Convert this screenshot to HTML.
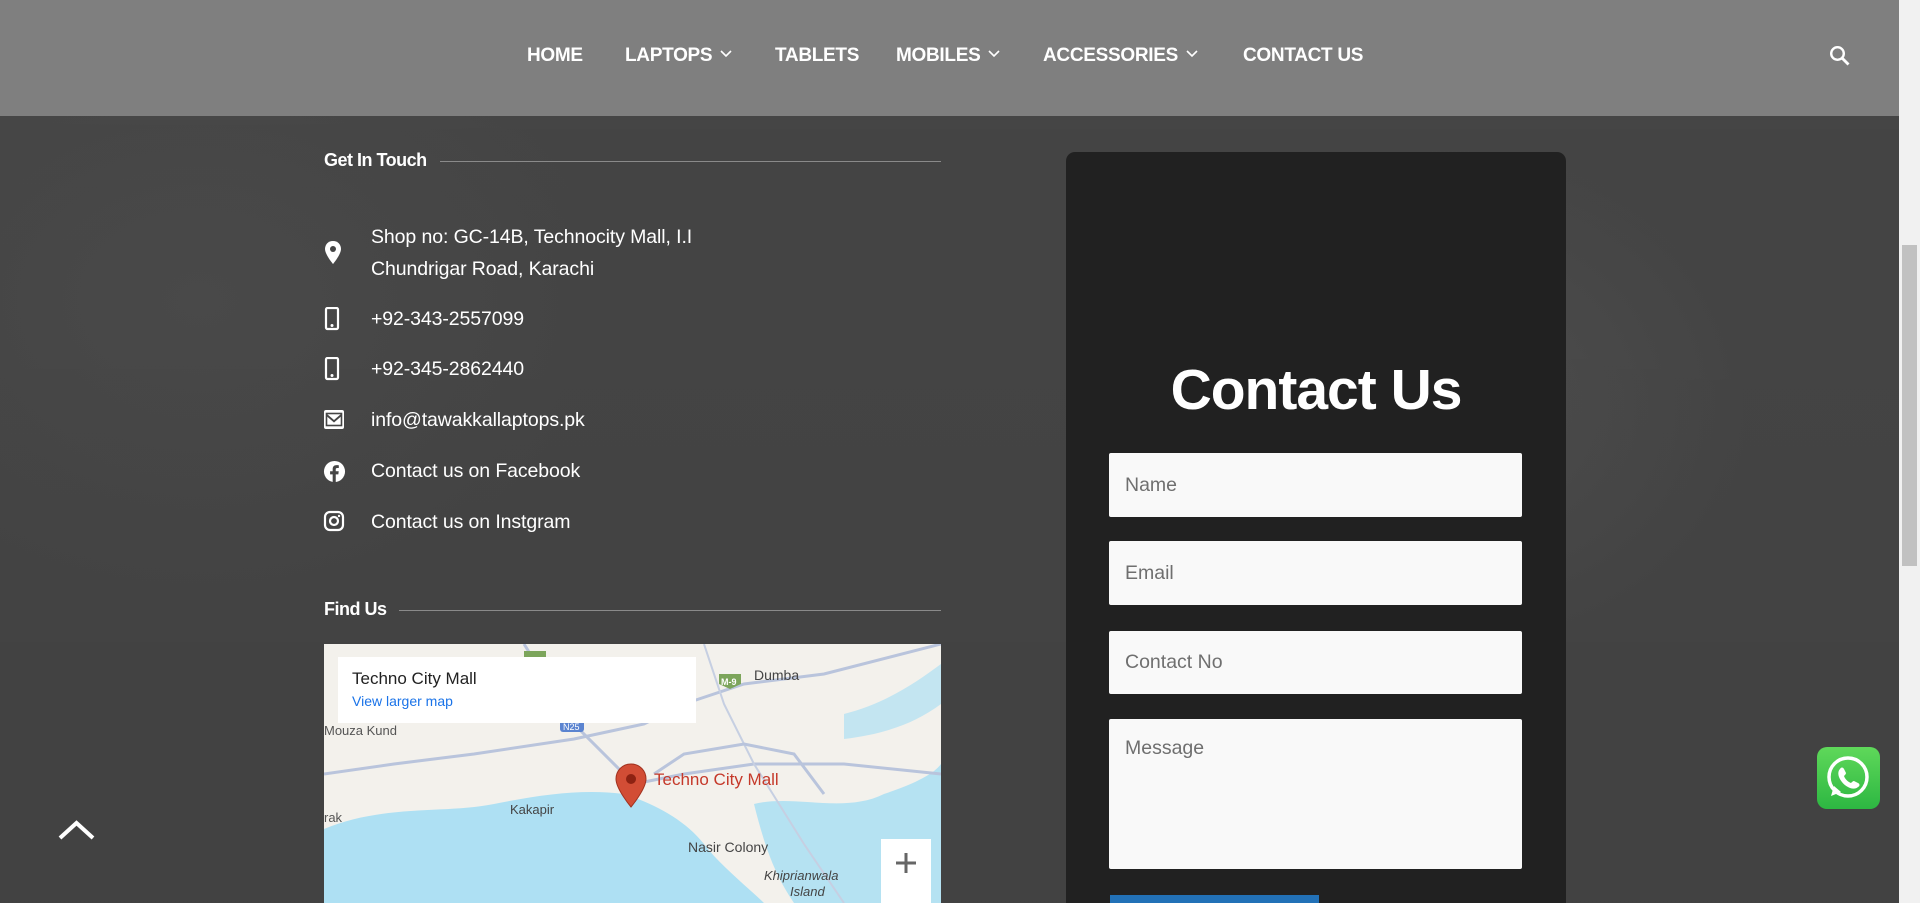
<!DOCTYPE html>
<html style="width:1920px;height:903px;overflow:hidden"><head><meta charset="utf-8"><style>
*{margin:0;padding:0;box-sizing:border-box}
body{width:1920px;height:903px;overflow:hidden;position:relative;font-family:"Liberation Sans",sans-serif;background:#434343}
.bg{position:absolute;left:0;top:0;width:1899px;height:903px;background:
linear-gradient(180deg,rgba(0,0,0,0) 0,rgba(0,0,0,.05) 100%),
radial-gradient(ellipse 300px 250px at 1450px 400px,#4e4e4e,rgba(0,0,0,0)),
radial-gradient(ellipse 400px 300px at 200px 300px,#4a4a4a,rgba(0,0,0,0)),
#454545}
.nav{position:absolute;left:0;top:0;width:1899px;height:116px;background:#7f7f7f}
.nav a{position:absolute;top:45px;color:#fff;font-size:19px;font-weight:bold;letter-spacing:-.3px;text-decoration:none;white-space:nowrap}
.nav a svg{margin-left:8px;vertical-align:3px}
.sb{position:absolute;left:1899px;top:0;width:21px;height:903px;background:#f1f1f1}
.sb div{position:absolute;left:3px;top:245px;width:15px;height:321px;background:#c1c1c1}
h4{position:absolute;color:#fff;font-size:18px;font-weight:bold;letter-spacing:-.5px}
.line{position:absolute;height:1px;background:#8a8a8a}
.it{position:absolute;left:371px;color:#fff;font-size:19.5px;letter-spacing:-.1px}
.ic{position:absolute;left:323px}
.card{position:absolute;left:1066px;top:152px;width:500px;height:751px;overflow:hidden;background:#212121;border-radius:9px 9px 0 0}
.card h2{position:absolute;left:0;width:100%;top:208px;line-height:60px;text-align:center;color:#fff;font-size:57px;font-weight:bold;letter-spacing:-1px}
.in{position:absolute;left:43px;width:413px;background:#f9f9f9;border-radius:2px;color:#6f6f6f;font-size:19.5px;padding-left:16px}
.map{position:absolute;left:324px;top:644px;width:617px;height:259px;overflow:hidden;background:#f3f1ec}
</style></head><body>
<div class="bg"></div>
<div class="nav">
<a style="left:527px">HOME</a>
<a style="left:625px">LAPTOPS<svg width="12" height="8" viewBox="0 0 12 8"><path d="M1 1l5 5 5-5" stroke="#fff" stroke-width="1.6" fill="none"/></svg></a>
<a style="left:775px">TABLETS</a>
<a style="left:896px">MOBILES<svg width="12" height="8" viewBox="0 0 12 8"><path d="M1 1l5 5 5-5" stroke="#fff" stroke-width="1.6" fill="none"/></svg></a>
<a style="left:1043px">ACCESSORIES<svg width="12" height="8" viewBox="0 0 12 8"><path d="M1 1l5 5 5-5" stroke="#fff" stroke-width="1.6" fill="none"/></svg></a>
<a style="left:1243px">CONTACT US</a>
<svg style="position:absolute;left:1828px;top:44px" width="24" height="24" viewBox="0 0 24 24"><circle cx="9.5" cy="9.5" r="6.3" stroke="#fff" stroke-width="2.4" fill="none"/><path d="M14 14l6.5 6.5" stroke="#fff" stroke-width="2.8"/></svg>
</div>
<div class="sb"><div></div></div>

<h4 style="left:324px;top:150px">Get In Touch</h4>
<div class="line" style="left:440px;top:161px;width:501px"></div>

<svg class="ic" style="top:240px" width="20" height="26" viewBox="0 0 20 26"><path d="M10 1C5 1 2 4.8 2 9c0 5.5 8 15 8 15s8-9.5 8-15c0-4.2-3-8-8-8z" fill="#fff"/><circle cx="10" cy="9" r="3" fill="#454545"/></svg>
<div class="it" style="top:226px">Shop no: GC-14B, Technocity Mall, I.I</div>
<div class="it" style="top:258px">Chundrigar Road, Karachi</div>

<svg class="ic" style="top:307px" width="18" height="24" viewBox="0 0 18 24"><rect x="3" y="1" width="12" height="21" rx="1.5" fill="none" stroke="#fff" stroke-width="2.2"/><circle cx="9" cy="18.5" r="1.5" fill="#fff"/></svg>
<div class="it" style="top:308px">+92-343-2557099</div>
<svg class="ic" style="top:357px" width="18" height="24" viewBox="0 0 18 24"><rect x="3" y="1" width="12" height="21" rx="1.5" fill="none" stroke="#fff" stroke-width="2.2"/><circle cx="9" cy="18.5" r="1.5" fill="#fff"/></svg>
<div class="it" style="top:358px">+92-345-2862440</div>
<svg class="ic" style="top:409px" width="22" height="22" viewBox="0 0 22 22"><rect x="1" y="1" width="20" height="19" rx="2" fill="#fff"/><path d="M4 5l7 6 7-6v11H4z" fill="#454545"/><path d="M4 7.5l7 6 7-6v9H4z" fill="#fff"/><rect x="3.5" y="4.5" width="15" height="12" fill="none" stroke="#454545" stroke-width="1.6"/></svg>
<div class="it" style="top:409px">info@tawakkallaptops.pk</div>
<svg class="ic" style="top:460px" width="23" height="23" viewBox="0 0 24 24"><circle cx="12" cy="12" r="11" fill="#fff"/><path d="M13.3 23V15h2.7l.4-3.2h-3.1V9.8c0-.9.3-1.5 1.6-1.5h1.6V5.5c-.3 0-1.3-.1-2.4-.1-2.4 0-4 1.4-4 4.1v2.3H7.4V15h2.7v8z" fill="#454545"/></svg>
<div class="it" style="top:460px">Contact us on Facebook</div>
<svg class="ic" style="top:510px" width="22" height="22" viewBox="0 0 22 22"><rect x="2" y="2" width="18" height="18" rx="5" fill="none" stroke="#fff" stroke-width="2.2"/><circle cx="11" cy="11" r="4" fill="none" stroke="#fff" stroke-width="2.2"/><circle cx="16" cy="6" r="1.2" fill="#fff"/></svg>
<div class="it" style="top:511px">Contact us on Instgram</div>

<h4 style="left:324px;top:599px">Find Us</h4>
<div class="line" style="left:399px;top:610px;width:542px"></div>

<div class="map">
<svg width="617" height="259" viewBox="0 0 617 259">
<path d="M0 185 C60 160 120 170 170 160 C220 150 260 145 300 150 C330 160 360 175 380 200 C395 220 420 240 440 259 L0 259Z" fill="#aee0f3"/>
<path d="M430 160 C470 150 520 170 560 150 C590 140 610 130 617 120 L617 259 L470 259 C450 230 440 200 430 160Z" fill="#aee0f3" opacity=".9"/>
<path d="M520 70 C560 60 590 40 617 20 L617 60 C590 80 560 90 520 95Z" fill="#aee0f3" opacity=".7"/>
<path d="M0 130 L70 120 L150 110 L250 95 L320 80 L360 60 L420 40 L500 30 L617 0" stroke="#b9c4dc" stroke-width="3" fill="none"/>
<path d="M200 0 L250 80 L310 140 L360 130 L430 120 L520 120 L617 130" stroke="#b9c4dc" stroke-width="3" fill="none"/>
<path d="M380 0 L400 60 L430 120 L480 200 L520 259" stroke="#c6cfe2" stroke-width="2" fill="none"/>
<path d="M330 130 L360 110 L420 100 L470 110 L500 150" stroke="#b9c4dc" stroke-width="3" fill="none"/>
<path d="M200 7 h22 v12 h-22z" fill="#7ca55b"/>
<path d="M395 30 h22 v10 l-11 5 l-11 -5z" fill="#7ca55b"/><text x="397" y="41" font-size="9" fill="#fff" font-weight="bold" font-family="Liberation Sans">M-9</text>
<rect x="236" y="75" width="24" height="13" rx="3" fill="#5b84d0"/><text x="239" y="86" font-size="9" fill="#fff" font-family="Liberation Sans">N25</text>
<text x="430" y="36" font-size="14" fill="#444" font-family="Liberation Sans">Dumba</text>
<text x="0" y="91" font-size="13" fill="#555" font-family="Liberation Sans">Mouza Kund</text>
<text x="0" y="178" font-size="13" fill="#555" font-family="Liberation Sans">rak</text>
<text x="186" y="170" font-size="13" fill="#444" font-family="Liberation Sans">Kakapir</text>
<text x="364" y="208" font-size="14" fill="#444" font-family="Liberation Sans">Nasir Colony</text>
<text x="440" y="236" font-size="13" fill="#444" font-style="italic" font-family="Liberation Sans">Khiprianwala</text>
<text x="466" y="252" font-size="13" fill="#444" font-style="italic" font-family="Liberation Sans">Island</text>
<text x="330" y="141" font-size="17" fill="#c5392a" font-family="Liberation Sans">Techno City Mall</text>
<path d="M307 120c-9 0-15 7-15 15 0 10 15 28 15 28s15-18 15-28c0-8-6-15-15-15z" fill="#d24d35" stroke="#a1321f"/><circle cx="307" cy="135" r="5" fill="#8d2212"/>
<rect x="14" y="13" width="358" height="66" fill="#fff"/>
<text x="28" y="40" font-size="17" fill="#222" font-family="Liberation Sans">Techno City Mall</text>
<text x="28" y="62" font-size="14" fill="#1a73e8" font-family="Liberation Sans">View larger map</text>
<rect x="557" y="195" width="50" height="64" fill="#fff"/>
<path d="M572 219h20M582 209v20" stroke="#666" stroke-width="3"/>
</svg>
</div>

<div class="card">
<h2>Contact Us</h2>
<div class="in" style="top:301px;height:64px;line-height:64px">Name</div>
<div class="in" style="top:389px;height:64px;line-height:64px">Email</div>
<div class="in" style="top:479px;height:63px;line-height:63px">Contact No</div>
<div class="in" style="top:567px;height:150px;padding-top:18px">Message</div>
<div style="position:absolute;left:44px;top:743px;width:209px;height:40px;background:#2271b7"></div>
</div>

<div style="position:absolute;left:1817px;top:747px;width:63px;height:62px;border-radius:10px;background:linear-gradient(#5fd85a,#2db742)">
<svg width="63" height="62" viewBox="0 0 63 62"><circle cx="31" cy="30" r="19" fill="none" stroke="#fff" stroke-width="3.5"/><path d="M14 49l3-10 7 6z" fill="#fff"/><path d="M23 22c1-2 3-2 4 0l2 4c0 1-1 2-2 3 1 3 4 6 7 7 1-1 2-2 3-2l4 2c2 1 2 3 0 4-2 2-5 2-8 1-5-2-9-6-11-11-1-3-1-6 1-8z" fill="#fff"/></svg>
</div>

<svg style="position:absolute;left:58px;top:819px" width="37" height="22" viewBox="0 0 37 22"><path d="M2 19L18.5 4 35 19" stroke="#fff" stroke-width="4" fill="none"/></svg>
</body></html>
